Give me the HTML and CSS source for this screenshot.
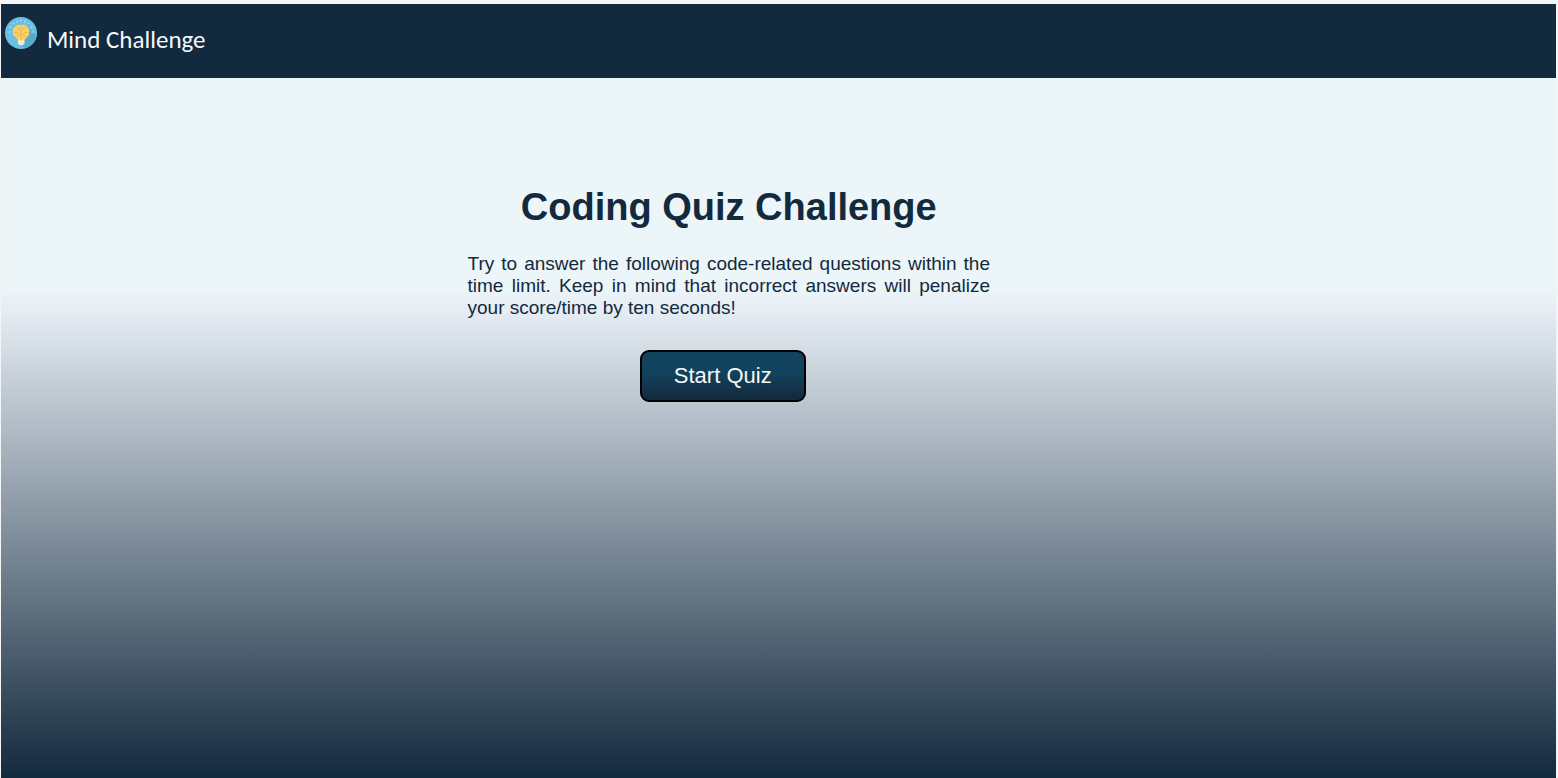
FILE: index.html
```
<!DOCTYPE html>
<html lang="en">
<head>
<meta charset="utf-8">
<title>Mind Challenge</title>
<link rel="stylesheet" href="styles.css">
</head>
<body>
<div class="page">
  <header class="header">
    <svg class="logo" viewBox="0 0 32 32" aria-hidden="true">
      <defs><clipPath id="disc"><circle cx="16" cy="16" r="16"/></clipPath></defs>
      <circle cx="16" cy="16" r="16" fill="#6bc0e2"/>
      <path clip-path="url(#disc)" d="M24 11 L34 21 V34 H24 L15 27 L22 20Z" fill="#5aabca"/>
      <g stroke="#c5e9f3" stroke-width="1" stroke-linecap="round">
        <path d="M4 15h1M5 10l1 .5M8 6l.8.8M12 4l.3 1M16 3v1M20 4l-.3 1M24 6l-.8.8M27 10l-1 .5M28 15h-1"/>
      </g>
      <path d="M16 8C12.500 7 10 8.800 9.800 10.600C7.700 11.700 7 14 8 15.800C7.500 17.900 9 19.800 11 20.200C11.500 22 12.500 22.500 13 24H19.200C19.700 22.500 20.700 22 21.200 20.200C23.200 19.800 24.600 17.900 24 15.800C25 14 24.400 11.700 22.300 10.600C22 8.800 19.500 7 16 8Z" fill="#fad163"/>
      <path d="M16 8.500V22M12 11c1.500-.5 2.500.5 2.200 1.800M9.500 15.500c1.500-1 3.300-.5 3.500 1M12.500 19.500c0-1.300 1-2 2-1.500M20 11c-1.500-.5-2.500.5-2.200 1.800M22.500 15.500c-1.500-1-3.300-.5-3.500 1M19.500 19.500c0-1.300-1-2-2-1.500" fill="none" stroke="#dfaa45" stroke-width=".8" stroke-linecap="round"/>
      <path d="M13 23.500h6.500v2.700l-1.500 1.800h-3.500L13 26.200Z" fill="#f1f3ec"/>
      <path d="M13.200 25.800h6" stroke="#b7c4c8" stroke-width=".6"/>
    </svg>
    <span class="brand">Mind Challenge</span>
  </header>
  <main class="intro">
    <h1 class="title">Coding Quiz Challenge</h1>
    <p class="text">Try to answer the following code-related questions within the time limit. Keep in mind that incorrect answers will penalize your score/time by ten seconds!</p>
    <button class="start" type="button">Start Quiz</button>
  </main>
</div>
</body>
</html>
```
FILE: styles.css
```
* { box-sizing: border-box; }
body {
  margin: 0;
  background: #f6f8f9;
  font-family: Arial, "Liberation Sans", sans-serif;
  color: #13293d;
}
.page {
  display: flex;
  flex-direction: column;
  min-height: 100vh;
  border: solid #f4f5f6;
  border-width: 4px 2px 0 1px;
  background: #13293d;
}
.header {
  display: flex;
  align-items: flex-start;
  gap: 10px;
  height: 74px;
  padding: 13px 4px;
  background: #13293d;
}
.logo { width: 32px; height: 32px; }
.brand {
  padding-top: 8px;
  font: 25px/30px Carlito, Lato, sans-serif;
  color: #f3f8fb;
}
.intro {
  flex: 1;
  display: flex;
  flex-direction: column;
  padding: 107px 36.400% 0 30%;
  background: linear-gradient(#ecf5f8 0%, #ecf5f8 30%, #e6edf4 33%, #13293d 100%);
}
.title {
  margin: 0;
  font-size: 38px;
  line-height: 44px;
  text-align: center;
  white-space: nowrap;
}
.text {
  margin: 24px 0 31px;
  font-size: 19px;
  line-height: 22px;
  text-align: justify;
}
.start {
  align-self: center;
  margin-right: 12px;
  padding: 11px 32px;
  border: 2px solid #000;
  border-radius: 9px;
  background: linear-gradient(#12435e 0%, #12435e 40%, #13293d 100%);
  color: #f3f8fb;
  font: 22px/26px Arial, "Liberation Sans", sans-serif;
}
```
